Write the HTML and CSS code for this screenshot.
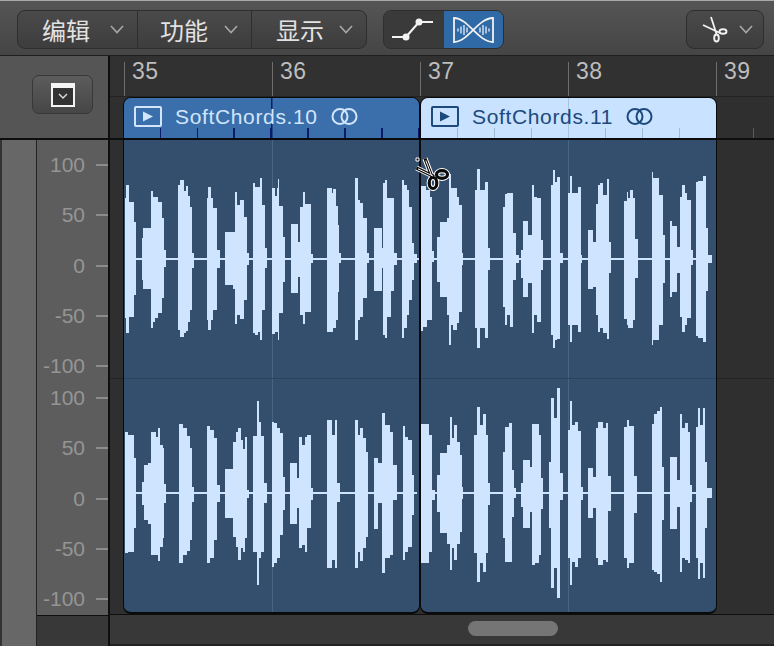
FILE: index.html
```html
<!DOCTYPE html>
<html lang="zh">
<head>
    <meta charset="UTF-8">
    <title>音频编辑器</title>
    <link rel="stylesheet" href="styles.css">
</head>
<body>
    <div class="window">
        <div class="toolbar">
            <div class="btn-group menus">
                <div class="menu menu-edit"><span>编辑</span><svg class="chevron" viewBox="0 0 14 9"><path d="M1 1l6 6.5L13 1"/></svg></div>
                <div class="menu menu-func"><span>功能</span><svg class="chevron" viewBox="0 0 14 9"><path d="M1 1l6 6.5L13 1"/></svg></div>
                <div class="menu menu-view"><span>显示</span><svg class="chevron" viewBox="0 0 14 9"><path d="M1 1l6 6.5L13 1"/></svg></div>
            </div>
            <div class="btn-group modes">
                <div class="mode">
                    <svg width="60" height="38" viewBox="384 11 60 38">
                        <path class="icon-line" d="M392 37H406L419 22H433"/>
                        <circle class="icon-dot" cx="406" cy="37" r="3.5"/>
                        <circle class="icon-dot" cx="419" cy="22" r="3.5"/>
                    </svg>
                </div>
                <div class="mode mode-on">
                    <svg width="59" height="38" viewBox="444 11 59 38">
                        <path class="icon-line thin" d="M454 18C468 18 478 42 493 42V18C478 18 468 42 454 42Z"/>
                        <path class="icon-line bars" d="M458 28.5v3M461 26.5v7M464 25v10M467 27.5v5M480 27.5v5M483 25v10M486 26.5v7M489 28.5v3"/>
                    </svg>
                </div>
            </div>
            <div class="btn-group tool-picker">
                <svg class="tool-icon" width="26" height="27" viewBox="701 16 26 27">
                    <path class="icon-line thin" d="M702 25L719 33M710 17L715.500 34"/>
                    <ellipse class="icon-ring" cx="722" cy="31.500" rx="3.500" ry="2.300"/>
                    <ellipse class="icon-ring" cx="715.500" cy="38" rx="2.300" ry="3.500"/>
                </svg>
                <svg class="chevron" viewBox="0 0 14 9"><path d="M1 1l6 6.500L13 1"/></svg>
            </div>
        </div>

        <div class="editor">
            <div class="left-col">
                <div class="left-head">
                    <div class="head-btn">
                        <svg width="24" height="24" viewBox="0 0 24 24">
                            <rect class="box" x="1" y="1" width="22" height="22"/>
                            <path class="box-top" d="M1 1h22v4H1z"/>
                            <path class="box-arrow" d="M8 11l4 4 4-4"/>
                        </svg>
                    </div>
                </div>
                <div class="left-body">
                    <div class="strip"></div>
                    <div class="scale-col">
                        <div class="scale">
                            <div class="channel-scale">
                                <div class="mark"><span>100</span></div>
                                <div class="mark"><span>50</span></div>
                                <div class="mark"><span>0</span></div>
                                <div class="mark"><span>-50</span></div>
                                <div class="mark"><span>-100</span></div>
                            </div>
                            <div class="channel-scale">
                                <div class="mark"><span>100</span></div>
                                <div class="mark"><span>50</span></div>
                                <div class="mark"><span>0</span></div>
                                <div class="mark"><span>-50</span></div>
                                <div class="mark"><span>-100</span></div>
                            </div>
                        </div>
                        <div class="corner"></div>
                    </div>
                </div>
            </div>

            <div class="main-col">
                <div class="ruler">
                    <div class="bar">35</div>
                    <div class="bar">36</div>
                    <div class="bar">37</div>
                    <div class="bar">38</div>
                    <div class="bar last">39</div>
                </div>

                <div class="lanes">
                    <div class="region region-a">
                        <div class="region-head">
                            <svg class="play" width="28" height="21" viewBox="0 0 28 21"><rect x="1" y="1" width="26" height="19" rx="1"/><path d="M9 5.500l10 5-10 5z"/></svg>
                            <span class="region-name">SoftChords.10</span>
                            <svg class="rings" width="27" height="19" viewBox="0 0 27 19"><circle cx="9" cy="9.500" r="7.500"/><circle cx="18" cy="9.500" r="7.500"/></svg>
                        </div>
                        <svg class="wave" width="295" height="472" viewBox="124 140 295 472">
                            <path class="grid" d="M272.500 140V612"/>
                            <path class="sep" d="M124 378.500H419"/>
                            <path class="center" d="M136 258h283v2H136zM125 492h292v2H125z"/>
                            <!-- canal superior -->
                            <path d="M125 198H126V185H129V202H134V222H136V295H134V317H129V333H126V318H125Z"/>
                            <path d="M142 238H143V228H151V191H153V197H158V202H162V218H164V250H166V267H164V298H162V313H158V318H155V322H153V328H151V289H143V280H142Z"/>
                            <path d="M178 185H180V180H184V191H186V186H188V196H190V207H192V253H194V268H192V310H190V322H188V331H186V333H184V337H180V330H178Z"/>
                            <path d="M207 198H208V187H211V198H213V208H217V250H220V268H217V310H213V320H211V330H208V320H207Z"/>
                            <path d="M225 232H235V192H237V205H240V200H244V217H247V253H249V265H247V300H244V319H240V315H237V324H235V289H233V285H225Z"/>
                            <path d="M253 183H255V187H260V178H262V205H265V248H267V268H265V310H262V340H260V332H258V335H255V333H253Z"/>
                            <path d="M272 188H275V196H277V188H278V179H279V206H283V237H285V282H283V313H279V340H278V332H275V334H272Z"/>
                            <path d="M291 224H298V242H300V207H303V192H305V204H311V254H313V263H311V312H305V324H303V315H300V277H298V293H291Z"/>
                            <path d="M327 188H332V193H333V189H336V206H338V225H339V253H341V263H339V292H338V320H336V328H333V332H327Z"/>
                            <path d="M355 178H358V200H360V203H363V218H367V253H369V263H367V298H363V317H360V320H358V340H355Z"/>
                            <path d="M374 228H382V248H383V183H385V180H387V198H394V253H397V265H394V291H391V317H387V338H385V335H383V268H382V291H374Z"/>
                            <path d="M402 180H404V185H407V190H409V207H412V243H414V254H417V263H414V280H412V300H409V315H407V328H404V338H402Z"/>
                            <!-- canal inferior -->
                            <path d="M125 432H128V435H134V458H136V528H134V552H128V553H125Z"/>
                            <path d="M142 482H144V465H148V463H151V432H156V437H158V428H160V445H163V448H164V484H166V503H164V538H163V547H160V561H158V555H151V524H148V520H144V505H142Z"/>
                            <path d="M179 424H183V428H187V436H190V448H192V487H194V502H192V540H190V551H187V555H183V563H179Z"/>
                            <path d="M207 426H210V430H214V438H217V485H220V502H217V540H214V558H210V563H207Z"/>
                            <path d="M225 469H233V442H236V432H238V428H241V440H243V449H245V437H247V490H249V498H247V538H245V552H243V548H241V560H238V547H236V537H233V518H225Z"/>
                            <path d="M253 436H257V401H259V422H261V436H264V483H267V503H264V552H261V558H259V585H257V552H253Z"/>
                            <path d="M272 422H274V423H277V428H280V433H283V477H285V510H283V535H280V558H277V563H274V567H272Z"/>
                            <path d="M290 463H297V478H299V437H302V445H305V437H307V435H311V488H313V500H311V528H307V552H305V545H302V548H299V508H297V524H290Z"/>
                            <path d="M327 420H332V435H335V420H337V483H340V502H337V568H335V560H332V568H327Z"/>
                            <path d="M355 420H358V435H360V428H363V438H366V452H368V537H366V548H363V561H360V552H358V568H355Z"/>
                            <path d="M374 458H378V463H382V413H385V425H390V432H393V465H397V500H393V555H390V558H385V573H382V503H378V529H374Z"/>
                            <path d="M403 426H405V437H408V440H412V475H414V515H412V547H408V552H405V560H403Z"/>
                        </svg>
                    </div>

                    <div class="region region-b">
                        <div class="region-head">
                            <svg class="play" width="28" height="21" viewBox="0 0 28 21"><rect x="1" y="1" width="26" height="19" rx="1"/><path d="M9 5.500l10 5-10 5z"/></svg>
                            <span class="region-name">SoftChords.11</span>
                            <svg class="rings" width="27" height="19" viewBox="0 0 27 19"><circle cx="9" cy="9.500" r="7.500"/><circle cx="18" cy="9.500" r="7.500"/></svg>
                        </div>
                        <svg class="wave" width="295" height="472" viewBox="421 140 295 472">
                            <path class="grid" d="M568.500 140V612"/>
                            <path class="sep" d="M421 378.500H716"/>
                            <path class="center" d="M421 258h291v2H421zM421 492h291v2H421z"/>
                            <path d="M421 186H426V190H430V197H432V251H434V262H432V320H427V327H423V331H421Z"/>
                            <path d="M437 237H440V222H447V218H449V174H451V188H457V197H459V205H462V253H463V265H462V312H459V323H457V330H453V325H451V345H449V315H447V297H440V282H437Z"/>
                            <path d="M475 190H477V169H480V190H485V182H488V248H490V270H488V338H485V328H480V348H477V328H475Z"/>
                            <path d="M503 207H505V194H507V193H513V233H516V255H519V263H516V280H513V327H510V315H507V325H505V307H503Z"/>
                            <path d="M521 250H523V221H528V235H532V185H534V197H537V198H541V240H543V270H541V322H537V315H534V333H532V283H528V297H523V278H521Z"/>
                            <path d="M551 185H553V170H555V182H557V177H560V253H563V263H560V339H557V340H555V348H553V335H551Z"/>
                            <path d="M568 193H570V176H572V193H578V187H581V255H582V263H581V332H578V325H572V342H570V325H568Z"/>
                            <path d="M588 230H593V242H596V204H598V185H600V183H603V195H607V179H609V242H611V273H609V339H607V333H603V328H600V332H598V315H596V287H593V289H588Z"/>
                            <path d="M624 201H627V192H628V198H630V190H633V198H635V239H638V278H635V320H633V328H628V325H627V319H624Z"/>
                            <path d="M652 172H653V178H659V195H663V235H665V283H663V325H659V340H653V345H652Z"/>
                            <path d="M670 221H672V226H677V247H680V197H682V185H685V193H687V200H691V250H693V265H691V318H687V325H685V332H682V317H680V273H677V292H672V297H670Z"/>
                            <path d="M696 182H698V181H703V176H706V228H708V255H712V263H708V291H706V342H703V338H698V336H696Z"/>

                            <path d="M421 424H429V435H432V490H435V500H432V552H429V563H421Z"/>
                            <path d="M437 475H440V453H447V445H450V417H452V438H454V425H457V442H460V455H462V487H463V499H462V532H460V544H457V560H454V548H452V570H450V544H447V533H440V512H437Z"/>
                            <path d="M474 435H477V407H480V425H483V414H486V435H488V483H490V505H488V553H486V572H483V563H480V582H477V553H474Z"/>
                            <path d="M503 452H505V427H509V423H512V470H514V488H516V498H514V517H512V562H505V538H503Z"/>
                            <path d="M521 483H523V460H530V467H532V424H539V435H541V478H543V509H541V555H539V563H535V565H532V512H530V528H523V507H521Z"/>
                            <path d="M549 462H551V398H554V418H557V388H560V473H563V500H560V598H557V568H554V588H551V528H549Z"/>
                            <path d="M568 430H570V401H572V425H575V422H578V431H581V487H583V500H581V558H578V567H575V562H572V585H570V558H568Z"/>
                            <path d="M588 468H593V477H596V428H598V422H603V428H606V423H608V476H611V511H608V562H606V560H603V565H598V558H596V508H593V518H588Z"/>
                            <path d="M624 427H627V420H629V426H634V476H637V513H634V563H629V568H627V558H624Z"/>
                            <path d="M652 424H654V414H657V411H660V407H662V467H664V520H662V582H660V574H657V572H654V570H652Z"/>
                            <path d="M670 457H677V480H680V414H682V428H685V423H688V432H690V485H692V502H690V563H688V560H685V558H682V572H680V507H677V529H670Z"/>
                            <path d="M696 427H698V408H700V425H703V408H705V462H707V488H712V498H707V528H705V578H703V563H700V579H698V558H696Z"/>
                        </svg>
                    </div>
                </div>

                <div class="scroll-row">
                    <div class="scroll-thumb"></div>
                </div>
            </div>
        </div>

        <!-- cursor de tijeras -->
        <svg class="scissors" width="36" height="36" viewBox="414 155 36 36">
            <g class="halo">
                <path d="M416.500 168L434 176.500M425 158.500L432 177"/>
                <ellipse cx="442" cy="174.500" rx="5.500" ry="3.800"/>
                <ellipse cx="433" cy="183" rx="3.800" ry="5.500"/>
            </g>
            <g class="ink">
                <path d="M416.500 168L434 176.500M425 158.500L432 177"/>
                <ellipse cx="442" cy="174.500" rx="5.500" ry="3.800"/>
                <ellipse cx="433" cy="183" rx="3.800" ry="5.500"/>
            </g>
            <path class="core" d="M418 168.800L433 176M425.800 160.500L431.500 175.500"/>
            <path class="hot" d="M416 158h3v3h-3z"/>
        </svg>
    </div>
</body>
</html>
```

FILE: styles.css
```css
* {
    box-sizing: border-box;
}

body {
    margin: 0;
    font-family: "Liberation Sans", Arial, sans-serif;
    background: #2f2f2f;
}

.window {
    position: relative;
    width: 774px;
    height: 646px;
    overflow: hidden;
    display: flex;
    flex-direction: column;
}

/* Barra superior */
.toolbar {
    height: 56px;
    flex: none;
    display: flex;
    align-items: flex-start;
    gap: 16px;
    padding: 9px 10px 0 17px;
    background: linear-gradient(#555, #454545);
    border-top: 1px solid #a9a9a9;
    border-bottom: 1px solid #1f1f1f;
}

.btn-group {
    height: 39px;
    display: flex;
    border: 1px solid #2e2e2e;
    border-radius: 8px;
    background: linear-gradient(#4a4a4a, #3d3d3d);
    overflow: hidden;
}

.menus {
    width: 350px;
}

.menu {
    display: flex;
    align-items: center;
    justify-content: space-between;
    padding: 0 13px 0 24px;
    border-right: 1px solid #2e2e2e;
    color: #e2e2e2;
    font-family: "Noto Sans CJK SC", sans-serif;
    font-size: 24px;
}

.menu-edit {
    width: 120px;
}

.menu-func {
    width: 114px;
    padding-left: 22px;
}

.menu-view {
    width: 114px;
    border-right: none;
}

.chevron {
    width: 14px;
    height: 9px;
    flex: none;
}

.chevron path {
    fill: none;
    stroke: #a8a8a8;
    stroke-width: 1.6;
}

.modes {
    width: 121px;
}

.mode {
    width: 60px;
    background: #3a3a3a;
}

.mode-on {
    width: 59px;
    background: #2f69a6;
}

.mode svg {
    display: block;
}

.icon-line {
    fill: none;
    stroke: #f2f2f2;
    stroke-width: 2.2;
}

.icon-line.thin {
    stroke-width: 1.8;
}

.icon-line.bars {
    stroke-width: 1.3;
    stroke: #e6f1ff;
}

.icon-dot {
    fill: #f2f2f2;
}

.icon-ring {
    fill: none;
    stroke: #f2f2f2;
    stroke-width: 1.9;
}

.tool-picker {
    width: 78px;
    margin-left: auto;
    align-items: center;
    gap: 11px;
    padding-left: 15px;
}

.tool-icon {
    flex: none;
}

/* Zona de edicion */
.editor {
    flex: 1;
    display: flex;
    min-height: 0;
}

.left-col {
    width: 110px;
    flex: none;
    display: flex;
    flex-direction: column;
    border-right: 2px solid #0e0e0e;
}

.left-head {
    height: 84px;
    flex: none;
    padding: 19px 0 0 32px;
    background: #555;
    border-bottom: 2px solid #0e0e0e;
}

.head-btn {
    width: 61px;
    height: 39px;
    display: flex;
    align-items: center;
    justify-content: center;
    border: 1px solid #383838;
    border-radius: 7px;
    background: linear-gradient(#5c5c5c, #464646);
}

.box {
    fill: #333;
    stroke: #f4f4f4;
    stroke-width: 2;
}

.box-top {
    fill: #f4f4f4;
}

.box-arrow {
    fill: none;
    stroke: #d8d8d8;
    stroke-width: 1.5;
}

.left-body {
    flex: 1;
    display: flex;
    min-height: 0;
}

.strip {
    width: 37px;
    flex: none;
    background: #676767;
    border-left: 2px solid #333;
    border-right: 1px solid #222;
}

.scale-col {
    flex: 1;
    display: flex;
    flex-direction: column;
}

.scale {
    height: 476px;
    flex: none;
    padding-top: 13px;
    display: flex;
    flex-direction: column;
    gap: 8px;
    background: #5d5d5d;
    border-bottom: 1px solid #0e0e0e;
}

.channel-scale {
    display: flex;
    flex-direction: column;
    gap: 26.25px;
}

.mark {
    height: 24px;
    display: flex;
    align-items: center;
    justify-content: flex-end;
    gap: 11px;
    color: #959595;
    font-size: 21px;
}

.mark::after {
    content: "";
    width: 12px;
    height: 2px;
    background: #8c8c8c;
}

.corner {
    flex: 1;
    background: #383838;
}

.main-col {
    flex: 1;
    min-width: 0;
    display: flex;
    flex-direction: column;
}

/* Regla de compases */
.ruler {
    height: 41px;
    flex: none;
    display: flex;
    padding: 6px 0 0 14px;
    background: #313131;
    border-bottom: 1px solid #232323;
}

.bar {
    width: 148px;
    padding: 0 0 0 7px;
    border-left: 1px solid #6e6e6e;
    color: #bdbdbd;
    font-size: 23px;
    letter-spacing: 0.5px;
    line-height: 18px;
}

.bar.last {
    width: 58px;
}

/* Pistas */
.lanes {
    height: 518px;
    flex: none;
    display: flex;
    padding-left: 13px;
    border-bottom: 1px solid #0e0e0e;
    background:
        linear-gradient(#0e0e0e, #0e0e0e) 0 41px / 100% 2px no-repeat,
        linear-gradient(#232323, #232323) 0 281px / 100% 1px no-repeat,
        linear-gradient(#5a5a5a, #5a5a5a) 643px 31px / 1px 10px no-repeat,
        #2f2f2f;
}

.region {
    width: 297px;
    height: 517px;
    flex: none;
    display: flex;
    flex-direction: column;
    border: 1px solid #0a0a0a;
    border-bottom-width: 2px;
    border-radius: 8px;
    background: #344f6d;
    overflow: hidden;
}

.region-head {
    height: 42px;
    flex: none;
    display: flex;
    align-items: center;
    padding: 0 0 3px 10px;
    border-bottom: 2px solid #0a0a0a;
}

.region-name {
    margin: 0 13px 0 13px;
    font-size: 21px;
    letter-spacing: 0.65px;
}

.play rect,
.rings circle {
    fill: none;
    stroke-width: 2;
}

.region-a .region-head {
    color: #d2e5fb;
    background:
        linear-gradient(#0b1c6b, #0b1c6b) 147px 0 / 1.5px 100% no-repeat,
        repeating-linear-gradient(90deg, transparent 0 35.5px, #0b1c6b 35.5px 37px) 0 100% / 100% 10px no-repeat,
        #3a6fab;
}

.region-b .region-head {
    color: #1d4a7c;
    background:
        linear-gradient(#a9c2de, #a9c2de) 147px 0 / 1px 100% no-repeat,
        repeating-linear-gradient(90deg, transparent 0 36px, #a3b9d1 36px 37px) 0 100% / 100% 10px no-repeat,
        #c9e2ff;
}

.region-a .play rect,
.region-a .rings circle {
    stroke: #d2e5fb;
}

.region-a .play path {
    fill: #d2e5fb;
}

.region-b .play rect,
.region-b .rings circle {
    stroke: #1d4a7c;
}

.region-b .play path {
    fill: #1d4a7c;
}

.wave {
    display: block;
    fill: #cfe5ff;
    shape-rendering: crispEdges;
}

.wave .grid {
    fill: none;
    stroke: #476482;
}

.wave .sep {
    fill: none;
    stroke: #2a425c;
}

.scroll-row {
    flex: 1;
    padding: 6px 0 0 358px;
    background: #383838;
    border-bottom: 2px solid #222;
}

.scroll-thumb {
    width: 90px;
    height: 15px;
    border-radius: 8px;
    background: #757575;
}

/* Cursor */
.scissors {
    position: absolute;
    left: 414px;
    top: 155px;
}

.scissors .halo {
    fill: none;
    stroke: #fff;
    stroke-width: 5.2;
}

.scissors .ink {
    fill: none;
    stroke: #0a0a0a;
    stroke-width: 3.2;
}

.scissors .core {
    fill: none;
    stroke: #fff;
    stroke-width: 1;
}

.scissors .hot {
    fill: #0a0a0a;
    stroke: #fff;
    stroke-width: 1;
}
```
